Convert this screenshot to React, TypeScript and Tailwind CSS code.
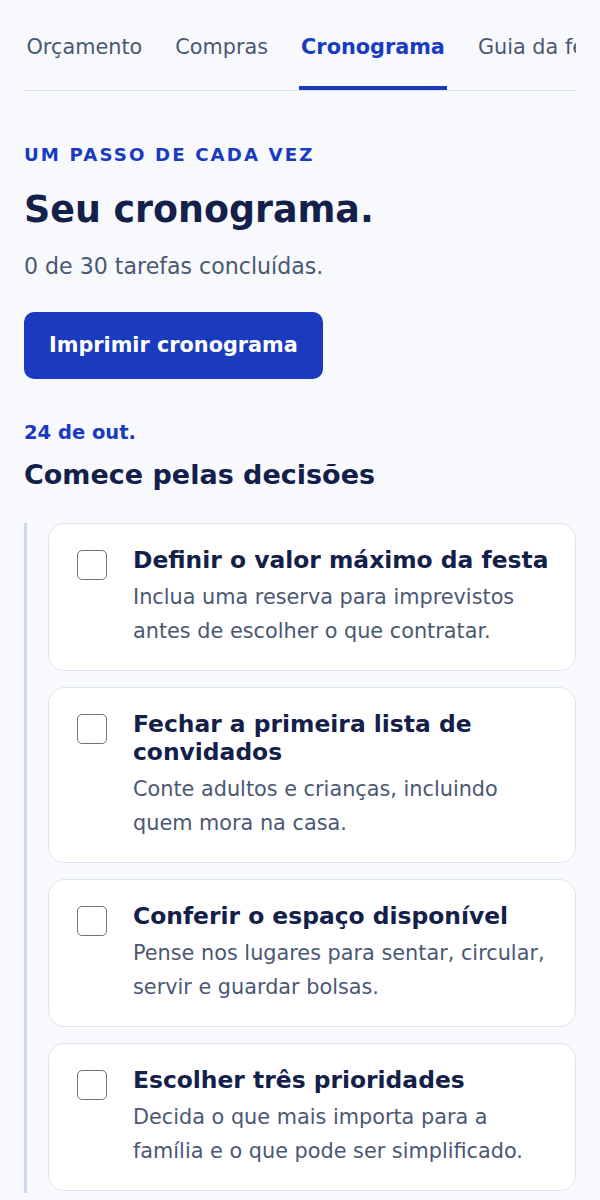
import { useState } from "react";

const tabs = ["Orçamento", "Compras", "Cronograma", "Guia da festa", "Convidados"];

const tasks = [
  { id: "t1", title: "Definir o valor máximo da festa", text: "Inclua uma reserva para imprevistos antes de escolher o que contratar." },
  { id: "t2", title: "Fechar a primeira lista de convidados", text: "Conte adultos e crianças, incluindo quem mora na casa." },
  { id: "t3", title: "Conferir o espaço disponível", text: "Pense nos lugares para sentar, circular, servir e guardar bolsas." },
  { id: "t4", title: "Escolher três prioridades", text: "Decida o que mais importa para a família e o que pode ser simplificado." },
];

export default function App() {
  const [done, setDone] = useState<string[]>([]);

  return (
    <div className="min-h-screen bg-[#f7f9fd] px-6 pb-10 font-['DejaVu_Sans',sans-serif]">
      <nav className="flex gap-[28px] overflow-hidden whitespace-nowrap border-b border-[#d9e1ee] pt-[20px]">
        {tabs.map((tab) => {
          const active = tab === "Cronograma";
          return (
            <button
              key={tab}
              className={
                active
                  ? "shrink-0 border-b-4 border-[#1a3bbf] px-[2.5px] pt-3 pb-[23px] text-[20.8px] leading-[31px] font-bold text-[#1a3bbf]"
                  : "shrink-0 border-b-4 border-transparent px-[2.5px] pt-3 pb-[23px] text-[20.8px] leading-[31px] text-[#4a5873]"
              }
            >
              {tab}
            </button>
          );
        })}
      </nav>

      <p className="mt-[51px] text-[18.2px] leading-[25px] font-bold uppercase tracking-[2.1px] text-[#1a3bbf]">Um passo de cada vez</p>
      <h1 className="mt-[21px] text-[36.4px] leading-[1.2] font-bold text-[#13214a]">Seu cronograma.</h1>
      <p className="mt-[18px] text-[22.1px] leading-[33px] text-[#4a5873]">
        {done.length} de 30 tarefas concluídas.
      </p>
      <button className="mt-[29px] h-[67px] rounded-[10px] bg-[#1a3bbf] px-[25px] text-[20.8px] font-bold text-white">
        Imprimir cronograma
      </button>

      <p className="mt-[39px] text-[19.5px] leading-[29px] font-bold text-[#1a3bbf]">24 de out.</p>
      <h2 className="mt-[10px] text-[27px] leading-[35px] font-bold text-[#13214a]">Comece pelas decisões</h2>

      <div className="mt-[31px] flex flex-col gap-4 border-l-[3px] border-[#c8d7f2] pb-[2px] pl-[21px]">
        {tasks.map((task) => (
          <label key={task.id} className="flex gap-[26px] rounded-[16px] border border-[#dfe5f0] bg-white pt-[22px] pb-[22px] pl-[28px] pr-[26px]">
            <input
              type="checkbox"
              className="mt-[4px] h-[30px] w-[30px] shrink-0 appearance-none rounded-[5px] border-[1.5px] border-[#747474] bg-white checked:bg-[#1a3bbf]"
              checked={done.includes(task.id)}
              onChange={(e) => setDone((cur) => (e.target.checked ? [...cur, task.id] : cur.filter((id) => id !== task.id)))}
            />
            <div className="min-w-0">
              <p className="text-[23.4px] leading-[28px] font-bold text-[#13214a]">{task.title}</p>
              <p className="mt-[6px] text-[20.8px] leading-[34px] text-[#4a5873]">{task.text}</p>
            </div>
          </label>
        ))}
      </div>
    </div>
  );
}
